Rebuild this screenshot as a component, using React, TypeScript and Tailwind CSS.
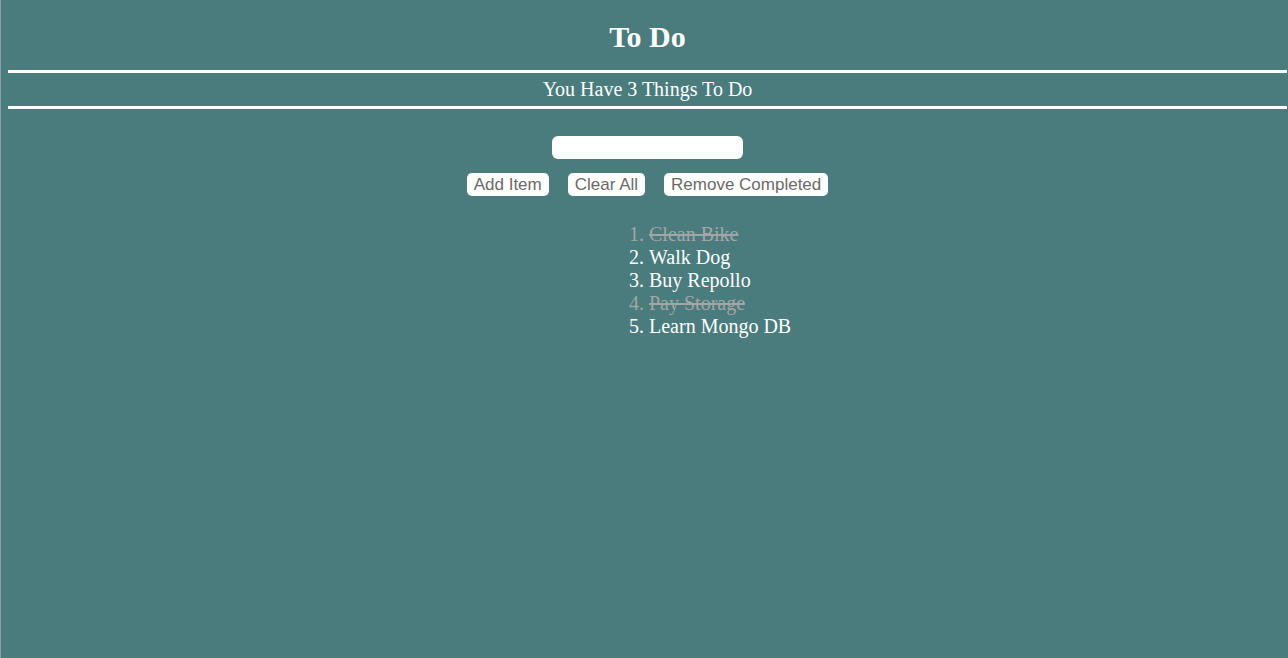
import React from "react";

const items = [
  { text: "Clean Bike", done: true },
  { text: "Walk Dog", done: false },
  { text: "Buy Repollo", done: false },
  { text: "Pay Storage", done: true },
  { text: "Learn Mongo DB", done: false },
];

export default function App() {
  const remaining = items.filter((i) => !i.done).length;
  return (
    <div className="min-h-[658px] w-full bg-[#4a7b7d] border-l border-[#86a2a3] pl-[7px] pr-[1px] text-white font-['Liberation_Serif','Times_New_Roman',serif]">
      <h1 className="text-center font-bold text-[30px] leading-[34px] pt-[20px] mb-[16px]">To Do</h1>
      <div className="border-y-[3px] border-white h-[39px] flex items-center justify-center">
        <h3 className="text-[20px] leading-[23px]">You Have {remaining} Things To Do</h3>
      </div>
      <div className="flex justify-center mt-[27px]">
        <input
          type="text"
          className="w-[191px] h-[23px] rounded-[6px] bg-white outline-none border-0 px-1 text-black"
        />
      </div>
      <div className="flex justify-center gap-[19px] mt-[14px] font-['Liberation_Sans',Arial,sans-serif]">
        {["Add Item", "Clear All", "Remove Completed"].map((b) => (
          <button
            key={b}
            className="h-[23px] px-[7px] rounded-[5px] bg-white text-[#6a6a6a] text-[17px] leading-[19px]"
          >
            {b}
          </button>
        ))}
      </div>
      <ol className="list-decimal list-outside mt-[27px] ml-[641px] text-[20px] leading-[23px]">
        {items.map((it) => (
          <li key={it.text} className={it.done ? "text-[#a3a6a6]" : "text-white"}>
            <span className={it.done ? "line-through" : ""}>{it.text}</span>
          </li>
        ))}
      </ol>
    </div>
  );
}
